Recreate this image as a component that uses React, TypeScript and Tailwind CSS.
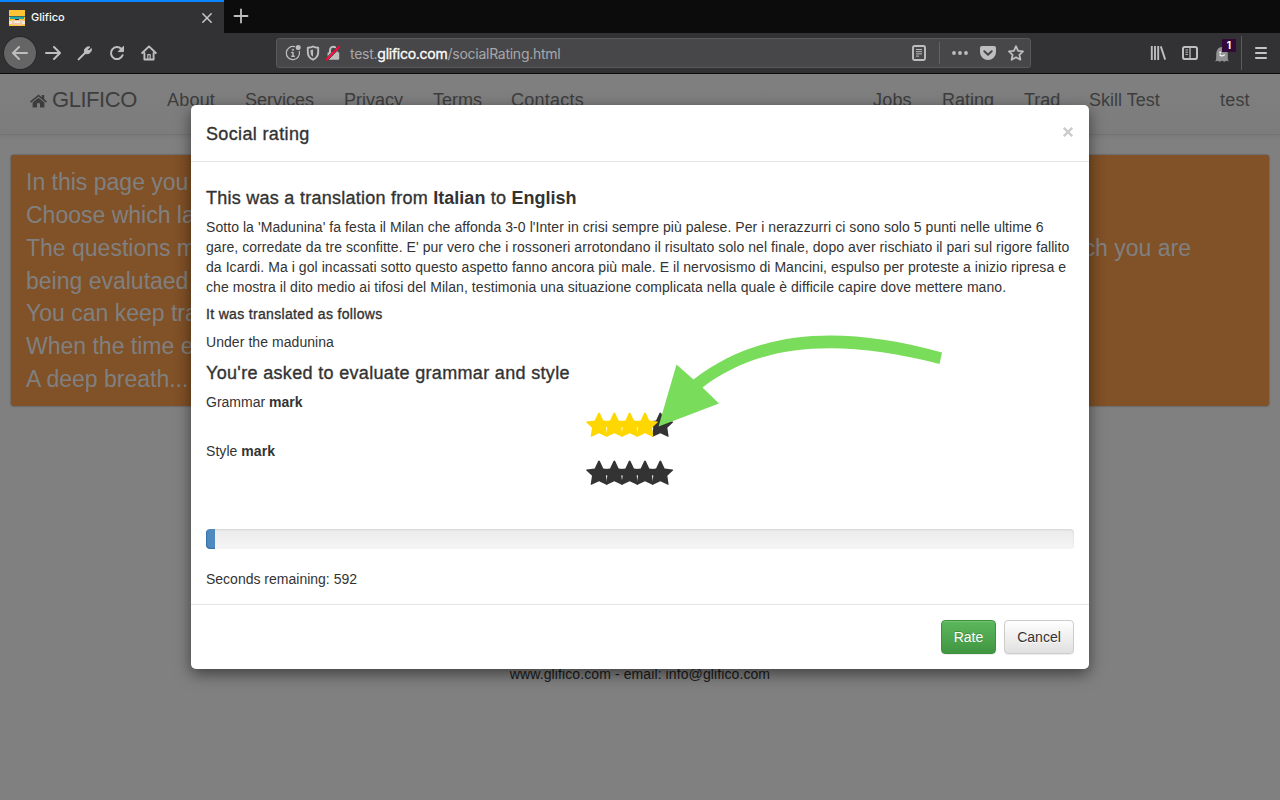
import type { ReactNode } from 'react';

function Icon({ children, className = 'size-4' }: { children: ReactNode; className?: string }) {
  return (
    <svg viewBox="0 0 16 16" fill="none" stroke="#bebebf" strokeWidth="2" strokeLinecap="round" strokeLinejoin="round" className={`shrink-0 ${className}`}>
      {children}
    </svg>
  );
}

function TabBar() {
  return (
    <div className="flex h-[33px] shrink-0 bg-[#0c0c0d]">
      <div className="flex w-[224px] items-center border-t-2 border-[#0a84ff] bg-[#323234] pr-[11px] pl-[9px]">
        <svg viewBox="0 0 16 16" className="size-4" shapeRendering="crispEdges">
          <rect width="16" height="16" fill="#fdc334" />
          <rect y="6" width="16" height="1" fill="#3a6a63" />
          <rect x="1" y="7" width="14" height="2" fill="#2aa5a0" />
          <rect x="6" y="9" width="4" height="1" fill="#2b3330" />
          <rect x="2" y="10" width="12" height="5" fill="#f3c9a5" />
          <rect x="0" y="11" width="3" height="3" fill="#f4e6d4" />
          <rect x="5" y="11" width="6" height="2" fill="#f6e9dd" />
          <rect x="13" y="11" width="3" height="3" fill="#f4e6d4" />
        </svg>
        <span className="ml-1.5 flex-1 font-[Inter] text-[11px] font-medium text-[#f9f9fa]">Glifico</span>
        <svg viewBox="0 0 12 12" className="size-3" stroke="#c8c8c9" strokeWidth="1.5" strokeLinecap="round"><path d="M1.8 1.8l8.4 8.4M10.2 1.8l-8.4 8.4" /></svg>
      </div>
      <svg viewBox="0 0 16 16" className="mt-2 ml-[9px] size-4" stroke="#bebebf" strokeWidth="1.8" strokeLinecap="round"><path d="M8 1.5v13M1.5 8h13" /></svg>
    </div>
  );
}

function Toolbar() {
  return (
    <div className="flex h-[41px] shrink-0 items-center border-b border-[#0c0c0d] bg-[#323234]">
      <div className="ml-1 flex size-8 items-center justify-center rounded-full bg-[#656566] shadow-[0_0_0_1px_#29292b]">
        <Icon><path d="M15 8H1.5M7 2L1 8l6 6" /></Icon>
      </div>
      <div className="ml-[9px] flex gap-4">
        <Icon><path d="M1 8h13.500M9 2l6 6-6 6" /></Icon>
        <Icon><path d="M1.600 14.400L8.200 7.800" /><path d="M7.400 7.200C6.800 4 9.500 1.200 12.800 2L10.600 4.200l.3 1.200 1.200.3L14.300 3.500C15 6.800 12 9.300 8.900 8.700z" strokeWidth="1" fill="#bebebf" /></Icon>
        <Icon><path d="M13.600 10.200A6 6 0 1 1 12.400 4" /><path d="M14.500 1.600v5H9.600z" fill="#bebebf" strokeWidth="1" /></Icon>
        <Icon><path d="M1.200 8L8 1.400 14.800 8M3.400 8v6.500h9.200V8" strokeWidth="1.900" /><path d="M6.800 14V9.600h2.400V14" strokeWidth="1.200" /></Icon>
      </div>
      <div className="ml-[119px] flex h-[30px] w-[755px] items-center rounded-[3px] border border-[#59595b] bg-[#474749] pr-1.5 pl-2">
        <Icon><path d="M9.600 1.700A6.600 6.600 0 1 0 14.300 6.400" strokeWidth="1.200" /><path d="M8 7.500V11M6.800 7.500H8M6.800 11.300h2.500" strokeWidth="1.400" /><circle cx="7.800" cy="4.800" r=".6" strokeWidth="1" /><circle cx="13.200" cy="2.600" r="2.500" fill="#bebebf" stroke="none" /></Icon>
        <Icon className="ml-1 size-4"><path d="M8 1.500C9.500 2.500 11.500 2.800 13.200 2.800V7c0 3.800-1.900 6.300-5.200 7.700C4.700 13.300 2.800 10.800 2.800 7V2.800C4.500 2.800 6.500 2.500 8 1.500z" strokeWidth="1.900" /><path d="M8 4.400L5.600 5v2.500c0 2 .8 3.200 2.400 4.200z" fill="#bebebf" stroke="none" /></Icon>
        <Icon className="ml-1 size-4"><path d="M5 7.500V5a3.300 3.300 0 0 1 6.600 0v2.500" /><rect x="2.600" y="7.200" width="11.600" height="7.600" rx="1" fill="#bebebf" stroke="none" /><path d="M2.600 15.400L15 2.800M1 13.400L13 1" stroke="#474749" strokeWidth="1" /><path d="M1.600 14.600L14.300 1.600" stroke="#ff0039" strokeWidth="2" /></Icon>
        <span className="mt-0.5 ml-[9px] flex-1 font-[Inter] text-sm tracking-[-0.260px] text-[#a7a7ab]">test.<span className="text-white [-webkit-text-stroke:0.300px_white]">glifico.com</span>/socialRating.html</span>
        <Icon><rect x="2" y="1" width="12" height="14" rx="1.500" strokeWidth="1.900" /><path d="M5 4.500h6M5 6.700h6M5 8.900h6M5 11.100h3" strokeWidth="1" strokeLinecap="butt" /></Icon>
        <div className="mx-3 h-[22px] w-px bg-[#636365]" />
        <Icon className="size-4"><g fill="#bebebf" stroke="none"><circle cx="2" cy="8" r="1.900" /><circle cx="8" cy="8" r="1.900" /><circle cx="14" cy="8" r="1.900" /></g></Icon>
        <Icon className="ml-3 size-4"><path d="M2 1h12a2 2 0 0 1 2 2v4a8 8 0 0 1-16 0V3a2 2 0 0 1 2-2z" fill="#bebebf" stroke="none" /><path d="M4.300 6.200L8 9.700l3.700-3.500" stroke="#474749" strokeWidth="2" /></Icon>
        <Icon className="ml-3 size-4"><path d="M8 1.200l2.100 4.600 4.900.6-3.600 3.400 1 4.900L8 12.300l-4.400 2.400 1-4.900L1 6.400l4.900-.6z" strokeWidth="1.800" /></Icon>
      </div>
      <Icon className="ml-[119px] size-4"><path d="M1.800 1v14M5 1v14M8.200 1v14M10.800 1.400l4.400 13.200" strokeWidth="1.900" strokeLinecap="butt" /></Icon>
      <Icon className="ml-4 size-4"><rect x="1" y="2" width="14" height="12" rx="1.800" strokeWidth="2" /><path d="M8 2v12" strokeWidth="1.300" /><path d="M3.500 5H6M3.500 7.200H6M3.500 9.400H6" strokeWidth="1" strokeLinecap="butt" /></Icon>
      <div className="relative ml-[17px] h-6 w-[21px]">
        <svg viewBox="0 0 14 16" className="mt-[5px] h-4 w-3.5"><path d="M0 15.500c1.400-1.500 1.200-3 1.200-7C1.200 4 3.500 1 7 1s5.800 3 5.800 7.500c0 4-.2 5.500 1.200 7l-2.500-.8-2.200 1-2.300-1-2.300 1-2.200-1z" fill="#929294" /><circle cx="5.200" cy="6.500" r="1" fill="#fff" /><path d="M4.500 8.500c1.500 2 4 1.500 5.200 0" stroke="#eee" strokeWidth="1.300" fill="none" /></svg>
        <span className="absolute -top-[2px] left-[7px] flex h-[13px] w-3.5 items-center justify-center bg-[#330938] font-[Inter] text-[10px] font-bold text-white">1</span>
      </div>
      <div className="ml-[5px] h-[34px] w-px bg-[#5c5c5e]" />
      <svg viewBox="0 0 12 12" className="ml-[13px] h-3 w-3" stroke="#c5c5c6" strokeWidth="1.800" strokeLinecap="round"><path d="M.9 1h10.200M.9 6h10.200M.9 11h10.200" /></svg>
    </div>
  );
}

function SiteNav() {
  return (
    <nav className="flex h-[61px] shrink-0 items-start border-b border-[#747474] bg-linear-to-b from-[#808080] to-[#7c7c7c] pt-[13px] text-[18px] leading-[26px] text-[#3d3d3d] shadow-[0_1px_5px_rgba(0,0,0,0.08)]">
      <svg viewBox="0 0 17 14" className="mt-[6px] ml-[30px] h-[15px] w-[17px]" fill="#3d3d3d"><path d="M8.500 1L0 8l1 1.200 7.500-6.100L16 9.200 17 8l-2.800-2.400V1.500h-2.400v2.200z" /><path d="M2.600 9L8.500 4.200 14.400 9v5H10V9.800H7V14H2.600z" /></svg>
      <span className="ml-[5px] w-[85px] text-[22px] tracking-[-0.450px] whitespace-nowrap">GLIFICO</span>
      <span className="ml-[30px] w-[48px] tracking-[0.200px]">About</span>
      <span className="ml-[30px] w-[69px]">Services</span>
      <span className="ml-[30px] w-[59px]">Privacy</span>
      <span className="ml-[30px] w-[48px]">Terms</span>
      <span className="ml-[30px] w-[73px] tracking-[0.250px]">Contacts</span>
      <span className="ml-[289px] w-[39px] tracking-[0.200px]">Jobs</span>
      <span className="ml-[30px] w-[52px]">Rating</span>
      <span className="ml-[30px] w-[35px]">Trad</span>
      <span className="ml-[30px] w-[71px] whitespace-nowrap">Skill Test</span>
      <span className="ml-[60px] tracking-[0.200px]">test</span>
    </nav>
  );
}

function Stars({ rating }: { rating: number }) {
  return (
    <svg viewBox="0 0 88 26" className="mx-auto block h-[26px] w-[88px]">
      {[4, 3, 2, 1, 0].map((i) => (
        <path key={i} transform={`translate(${13 + i * 15.33} 13.500)`} d="M0-13Q.5-13 .8-12.400L4.300-4.900 12.300-4Q13.400-3.700 12.600-3L7 2.200 8.300 10.700Q8.300 11.500 7.500 11.200L0 7.800-7.500 11.200Q-8.300 11.500-8.300 10.700L-7 2.200-12.600-3Q-13.400-3.700-12.300-4L-4.300-4.900-.8-12.400Q-.5-13 0-13z" fill={i < rating ? '#ffd700' : '#333'} />
      ))}
    </svg>
  );
}

function RatingModal() {
  return (
    <section className="absolute top-[105px] left-[191px] h-[564px] w-[898px] rounded-[5px] bg-white text-sm leading-5 text-[#333] shadow-[0_5px_15px_rgba(0,0,0,0.500)]">
      <header className="flex h-[57px] items-center justify-between border-b border-[#e5e5e5] px-[15px]">
        <h4 className="mt-0.5 text-[18px] tracking-[0.350px] [-webkit-text-stroke:0.350px_#333]">Social rating</h4>
        <svg viewBox="0 0 10 10" className="mr-[1px] mb-0.5 size-2.5" stroke="#ccc" strokeWidth="2.400"><path d="M.8.800l8.400 8.400M9.200.800L.8 9.200" /></svg>
      </header>
      <div className="h-[443px] border-b border-[#e5e5e5] px-[15px] pt-[26px]">
        <h4 className="text-[18px] tracking-[0.260px] [-webkit-text-stroke:0.350px_#333]">This was a translation from <b className="tracking-normal [-webkit-text-stroke:0]">Italian</b> to <b className="tracking-normal [-webkit-text-stroke:0]">English</b></h4>
        <p className="mt-[9px] tracking-[0.062px] whitespace-nowrap">
          <span className="block">Sotto la 'Madunina' fa festa il Milan che affonda 3-0 l'Inter in crisi sempre più palese. Per i nerazzurri ci sono solo 5 punti nelle ultime 6</span>
          <span className="block">gare, corredate da tre sconfitte. E' pur vero che i rossoneri arrotondano il risultato solo nel finale, dopo aver rischiato il pari sul rigore fallito</span>
          <span className="block">da Icardi. Ma i gol incassati sotto questo aspetto fanno ancora più male. E il nervosismo di Mancini, espulso per proteste a inizio ripresa e</span>
          <span className="block">che mostra il dito medio ai tifosi del Milan, testimonia una situazione complicata nella quale è difficile capire dove mettere mano.</span>
        </p>
        <h5 className="mt-[7px] tracking-[0.330px] [-webkit-text-stroke:0.350px_#333]">It was translated as follows</h5>
        <p className="mt-2 tracking-[0.060px]">Under the madunina</p>
        <h4 className="mt-[11px] text-[18px] tracking-[0.330px] [-webkit-text-stroke:0.350px_#333]">You're asked to evaluate grammar and style</h4>
        <p className="mt-[9px]">Grammar <b>mark</b></p>
        <div className="-ml-[21px] h-[29px]"><Stars rating={4} /></div>
        <p className="tracking-[0.050px]">Style <b>mark</b></p>
        <div className="-mt-[1px] -ml-[21px] h-[29px]"><Stars rating={0} /></div>
        <div className="mt-[40px] h-5 overflow-hidden rounded bg-linear-to-b from-[#ebebeb] to-[#f5f5f5] shadow-[inset_0_1px_2px_rgba(0,0,0,0.100)]">
          <div className="h-full w-[9px] rounded-l bg-[#4e8ac0] shadow-[inset_1px_-1px_1px_#3673aa]" />
        </div>
        <p className="mt-5">Seconds remaining: 592</p>
      </div>
      <footer className="flex justify-end gap-2 px-[15px] pt-[15px]">
        <button className="h-[34px] w-[55px] rounded border border-[#3e8f3e] bg-linear-to-b from-[#5cb85c] to-[#419641] text-white shadow-[inset_0_1px_0_rgba(255,255,255,0.150),0_1px_1px_rgba(0,0,0,0.075)] [text-shadow:0_-1px_0_rgba(0,0,0,0.200)]">Rate</button>
        <button className="h-[34px] w-[70px] rounded border border-[#ccc] bg-linear-to-b from-white to-[#e0e0e0] shadow-[0_1px_1px_rgba(0,0,0,0.075)] [text-shadow:0_1px_0_#fff]">Cancel</button>
      </footer>
    </section>
  );
}

export default function App() {
  return (
    <div className="relative flex h-[800px] w-[1280px] flex-col overflow-hidden bg-[#808080] font-['Liberation_Sans',Arial,sans-serif]">
      <TabBar />
      <Toolbar />
      <SiteNav />
      <main className="mx-[11px] mt-[20px] h-[251px] shrink-0 rounded-[3px] bg-[#815127] px-[15px] pt-[11px] text-[23px] leading-[32.860px] whitespace-nowrap text-[#808080] shadow-[0_0_2px_rgba(0,0,0,0.500)]">
        <p>In this page you</p>
        <p>Choose which la</p>
        <p className="flex justify-between pr-[63px]"><span>The questions m</span><span>ch you are</span></p>
        <p>being evalutaed</p>
        <p>You can keep tra</p>
        <p>When the time e</p>
        <p>A deep breath...</p>
      </main>
      <p className="mt-[258px] text-center text-sm leading-5 tracking-[0.100px] text-[#1a1a1a]">www.glifico.com - email: info@glifico.com</p>
      <RatingModal />
      <svg viewBox="0 0 300 100" className="absolute top-[330px] left-[650px] h-[100px] w-[300px]" fill="#79dc5b">
        <path d="M8.500 96.500L26.500 34.500 43.500 49.500C105 2 185-7 292 22.500L289.500 34C191 9 112 12 52.500 57.500L69 73.500z" />
      </svg>
    </div>
  );
}
